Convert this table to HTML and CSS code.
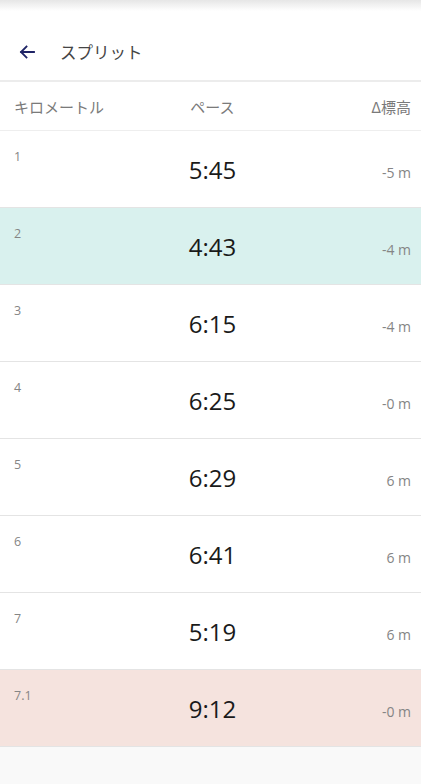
FILE: index.html
```html
<!DOCTYPE html>
<html lang="ja">
<head>
<meta charset="utf-8">
<title>スプリット</title>
<link rel="stylesheet" href="styles.css">
</head>
<body>
<div class="statusbar"></div>
<header class="appbar">
  <svg class="back" width="24" height="24" viewBox="0 0 24 24" aria-hidden="true">
    <path d="M19 12H6M11.5 6.5L6 12l5.5 5.5" fill="none" stroke="#1f2466" stroke-width="1.8" stroke-linecap="square"/>
  </svg>
  <h1 class="title">スプリット</h1>
</header>
<div class="colhead">
  <span class="c-km">キロメートル</span>
  <span class="c-pace">ペース</span>
  <span class="c-elev">Δ標高</span>
</div>
<div class="rows">
  <div class="row"><span class="km">1</span><span class="pace">5:45</span><span class="elev">-5 m</span></div>
  <div class="row fast"><span class="km">2</span><span class="pace">4:43</span><span class="elev">-4 m</span></div>
  <div class="row"><span class="km">3</span><span class="pace">6:15</span><span class="elev">-4 m</span></div>
  <div class="row"><span class="km">4</span><span class="pace">6:25</span><span class="elev">-0 m</span></div>
  <div class="row"><span class="km">5</span><span class="pace">6:29</span><span class="elev">6 m</span></div>
  <div class="row"><span class="km">6</span><span class="pace">6:41</span><span class="elev">6 m</span></div>
  <div class="row"><span class="km">7</span><span class="pace">5:19</span><span class="elev">6 m</span></div>
  <div class="row slow"><span class="km">7.1</span><span class="pace">9:12</span><span class="elev">-0 m</span></div>
</div>
<div class="rest"></div>
</body>
</html>
```
FILE: styles.css
```css
html, body {
  margin: 0;
  padding: 0;
  background: #f9f9f9;
  font-family: "Open Sans", "Noto Sans CJK JP", sans-serif;
}
body {
  width: 421px;
  height: 784px;
  overflow: hidden;
}
.statusbar {
  height: 11px;
  background: linear-gradient(#e6e6e6, #ffffff);
}
.appbar {
  background: #fff;
  display: flex;
  align-items: center;
  padding: 13px 0 0 15px;
  border-bottom: 2px solid #ececec;
  box-sizing: border-box;
  height: 71px;
}
.back {
  display: block;
}
.title {
  margin: 0 0 0 21px;
  font-family: "Noto Sans CJK JP", sans-serif;
  font-weight: 400;
  font-size: 16.5px;
  color: #454545;
}
.colhead {
  height: 49px;
  background: #fff;
  display: grid;
  grid-template-columns: 1fr auto 1fr;
  align-items: center;
  padding: 0 10px 0 14px;
  border-bottom: 1px solid #eeeeee;
  box-sizing: border-box;
  font-family: "Noto Sans CJK JP", sans-serif;
  font-size: 15px;
  color: #7a7a7a;
}
.c-pace { text-align: center; }
.c-elev { text-align: right; }
.rows {
  background: #fff;
}
.row {
  height: 77px;
  box-sizing: border-box;
  border-bottom: 1px solid #e4e4e4;
  display: grid;
  grid-template-columns: 1fr auto 1fr;
  align-items: center;
  padding: 0 10px 0 14px;
  background: #fff;
}
.row.fast { background: #d9f1ee; }
.row.slow { background: #f5e3de; }
.km {
  align-self: start;
  margin-top: 17px;
  font-size: 12.5px;
  color: #858585;
}
.pace {
  font-size: 24px;
  color: #1a1a1a;
  text-align: center;
  margin-top: 1px;
}
.elev {
  text-align: right;
  font-size: 14px;
  color: #858585;
  margin-top: 6px;
}
.rest {
  height: 40px;
  background: #f9f9f9;
}
```
